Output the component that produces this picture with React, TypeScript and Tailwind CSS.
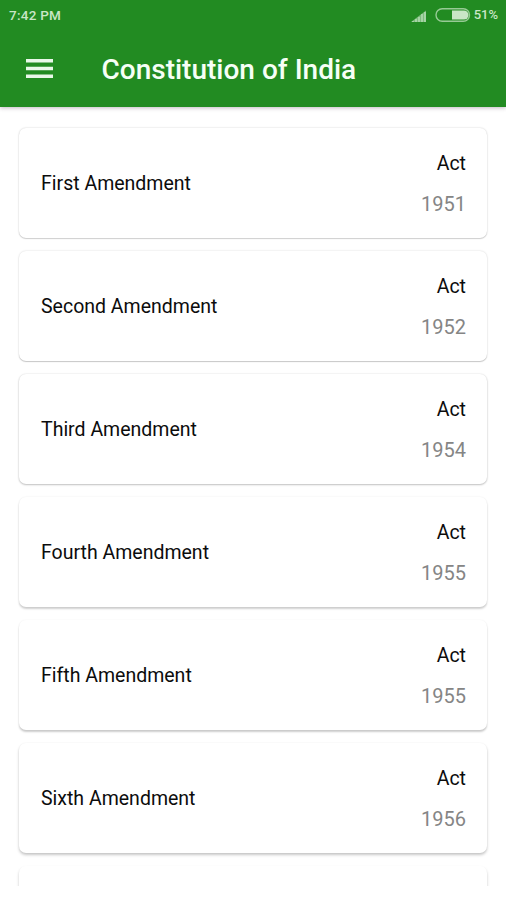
const amendments = [
  { name: "First Amendment", year: 1951, shadow: "shadow-[0_0_2px_rgba(0,0,0,0.2),0_1px_1px_rgba(0,0,0,0.14)]" },
  { name: "Second Amendment", year: 1952, shadow: "shadow-[0_0_2px_rgba(0,0,0,0.17),0_1px_1px_rgba(0,0,0,0.18)]" },
  { name: "Third Amendment", year: 1954, shadow: "shadow-[0_0_2px_rgba(0,0,0,0.13),0_1px_2px_rgba(0,0,0,0.22)]" },
  { name: "Fourth Amendment", year: 1955, shadow: "shadow-[0_0_2px_rgba(0,0,0,0.08),0_2px_2px_rgba(0,0,0,0.18)]" },
  { name: "Fifth Amendment", year: 1955, shadow: "shadow-[0_0_2px_rgba(0,0,0,0.06),0_2px_2px_rgba(0,0,0,0.2)]" },
  { name: "Sixth Amendment", year: 1956, shadow: "shadow-[0_0_2px_rgba(0,0,0,0.05),0_2px_3px_rgba(0,0,0,0.22)]" },
];

export default function App() {
  return (
    <div className="flex h-[900px] w-full flex-col bg-white font-['Roboto',sans-serif]">
      <header className="h-[107px] shrink-0 bg-[#228b22] text-white shadow-[0_1px_4px_rgba(60,30,60,0.3)]">
        <div className="flex h-[30px] items-center pl-[9px] pr-[8px] text-[13px] font-medium text-[#c9e6c6]">
          <span className="text-[13.5px] tracking-[0.25px]">7:42 PM</span>
          <svg className="mt-px ml-auto" width="16" height="12" viewBox="0 0 16 12" fill="currentColor">
            <path d="M0 12 15 .5V12z" opacity=".55" />
            <path d="M1 11h2v1H1zM4 9h2v3H4zM7 7h2v5H7zM10 4h2v8h-2zM13 2h2v10h-2z" opacity=".55" />
          </svg>
          <svg className="ml-[8px]" width="36" height="14" viewBox="0 0 36 14">
            <rect x="1" y=".8" width="33.5" height="12.4" rx="6.2" fill="none" stroke="currentColor" strokeOpacity=".7" strokeWidth="1.4" />
            <path d="M17 2.5H29a4.5 4.5 0 0 1 0 9H17z" fill="currentColor" />
          </svg>
          <span className="ml-[3px]">51%</span>
        </div>
        <div className="flex h-[77px] items-center pl-[26px]">
          <svg width="27" height="19" viewBox="0 0 27 19" fill="#e9f8e9">
            <path d="M0 0h27v3.5H0zM0 7.7h27v3.5H0zM0 15.5h27V19H0z" />
          </svg>
          <h1 className="ml-[48.5px] pt-[3px] text-[28px] font-medium text-[#f6fff6]">Constitution of India</h1>
        </div>
      </header>
      <main className="flex h-[779px] flex-col gap-[13px] overflow-hidden px-[19px] pt-[21px]">
        {amendments.map((a) => (
          <article
            key={a.name}
            className={`flex h-[110px] shrink-0 items-center justify-between rounded-[7px] bg-white pr-[21px] pl-[22px] text-[19.5px] text-[#0c0c0c] ${a.shadow}`}
          >
            <span className="pt-px">{a.name}</span>
            <div className="flex flex-col gap-[10px] pt-[2px] text-right leading-[30px]">
              <span>Act</span>
              <span className="text-[20px] text-[#858585]">{a.year}</span>
            </div>
          </article>
        ))}
        <div className="h-[110px] shrink-0 rounded-[7px] bg-white shadow-[0_2px_3px_rgba(0,0,0,0.22)]" />
      </main>
    </div>
  );
}
